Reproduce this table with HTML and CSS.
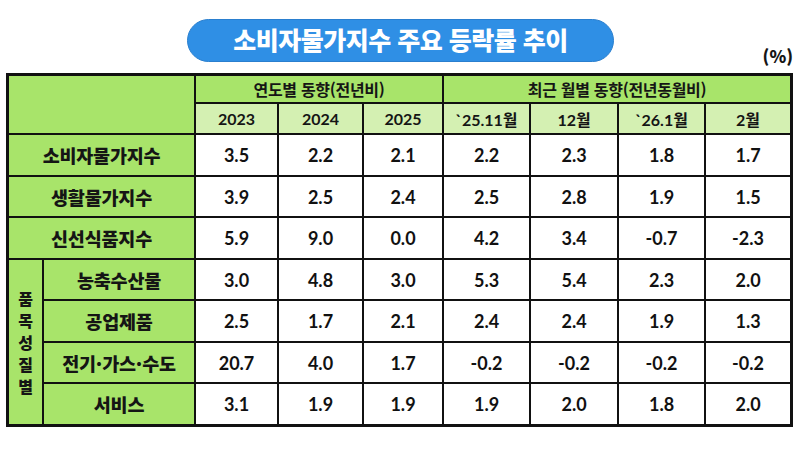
FILE: index.html
```html
<!DOCTYPE html>
<html lang="ko">
<head>
<meta charset="utf-8">
<link rel="stylesheet" href="styles.css">
</head>
<body>
<div class="page">
  <div class="head">
    <div class="title">소비자물가지수 주요 등락률 추이</div>
    <div class="unit">(%)</div>
  </div>
  <table class="cpi">
    <colgroup>
      <col class="c-a"><col class="c-b">
      <col class="c-1"><col class="c-2"><col class="c-3">
      <col class="c-4"><col class="c-5"><col class="c-6"><col class="c-7">
    </colgroup>
    <thead>
      <tr class="h1">
        <th colspan="2" rowspan="2" class="green"></th>
        <th colspan="3" class="green">연도별 동향(전년비)</th>
        <th colspan="4" class="green">최근 월별 동향(전년동월비)</th>
      </tr>
      <tr class="h2">
        <th class="light">2023</th><th class="light">2024</th><th class="light">2025</th>
        <th class="light">`25.11월</th><th class="light">12월</th><th class="light">`26.1월</th><th class="light">2월</th>
      </tr>
    </thead>
    <tbody>
      <tr class="r42">
        <th colspan="2" class="green label">소비자물가지수</th>
        <td>3.5</td><td>2.2</td><td>2.1</td><td>2.2</td><td>2.3</td><td>1.8</td><td>1.7</td>
      </tr>
      <tr class="r41">
        <th colspan="2" class="green label">생활물가지수</th>
        <td>3.9</td><td>2.5</td><td>2.4</td><td>2.5</td><td>2.8</td><td>1.9</td><td>1.5</td>
      </tr>
      <tr class="r42">
        <th colspan="2" class="green label">신선식품지수</th>
        <td>5.9</td><td>9.0</td><td>0.0</td><td>4.2</td><td>3.4</td><td>-0.7</td><td>-2.3</td>
      </tr>
      <tr class="r41">
        <th rowspan="4" class="green vert"><div class="vstack"><span>품</span><span>목</span><span>성</span><span>질</span><span>별</span></div></th>
        <th class="green label">농축수산물</th>
        <td>3.0</td><td>4.8</td><td>3.0</td><td>5.3</td><td>5.4</td><td>2.3</td><td>2.0</td>
      </tr>
      <tr class="r42">
        <th class="green label">공업제품</th>
        <td>2.5</td><td>1.7</td><td>2.1</td><td>2.4</td><td>2.4</td><td>1.9</td><td>1.3</td>
      </tr>
      <tr class="r41">
        <th class="green label">전기·가스·수도</th>
        <td>20.7</td><td>4.0</td><td>1.7</td><td>-0.2</td><td>-0.2</td><td>-0.2</td><td>-0.2</td>
      </tr>
      <tr class="r42">
        <th class="green label">서비스</th>
        <td>3.1</td><td>1.9</td><td>1.9</td><td>1.9</td><td>2.0</td><td>1.8</td><td>2.0</td>
      </tr>
    </tbody>
  </table>
</div>
</body>
</html>
```
FILE: styles.css
```css
* { box-sizing: border-box; }
html, body { margin: 0; padding: 0; background: #ffffff; }
body {
  width: 800px;
  height: 450px;
  overflow: hidden;
  font-family: "Noto Sans CJK KR", "Noto Sans", sans-serif;
  color: #151515;
}
.page { padding: 19px 7px 0 6px; }

.head {
  display: grid;
  height: 51px;
  margin-bottom: 3px;
}
.title, .unit { grid-area: 1 / 1; }
.title {
  justify-self: center;
  align-self: start;
  margin-left: 2px;
  width: 427px;
  height: 43px;
  border-radius: 22px;
  background: #2f8fe5;
  border: 1px solid #2a7fcf;
  color: #ffffff;
  font-weight: 900;
  font-size: 25px;
  line-height: 39px;
  text-align: center;
  letter-spacing: -0.5px;
}
.unit {
  justify-self: end;
  align-self: end;
  font-weight: 900;
  font-size: 17px;
  line-height: 20px;
  margin-bottom: 4px;
}

.cpi {
  width: 787px;
  table-layout: fixed;
  border-collapse: separate;
  border-spacing: 0;
  border: 2px solid #111;
}
.cpi th, .cpi td {
  border: 1px solid #111;
  padding: 0;
  text-align: center;
  vertical-align: middle;
}
.c-a { width: 35px; }
.c-b { width: 152px; }
.c-1 { width: 83px; }
.c-2 { width: 85px; }
.c-3 { width: 80px; }
.c-4 { width: 87px; }
.c-5 { width: 88px; }
.c-6 { width: 87px; }
.c-7 { width: 86px; }

.h1 { height: 28px; }
.h2 { height: 31px; }
.r42 { height: 42px; }
.r41 { height: 41px; }

.green { background: #a8e46a; }
.light { background: #d4f0b2; }

.h1 th {
  font-size: 16px;
  font-weight: 700;
  letter-spacing: -0.3px;
}
.h2 th {
  font-family: "Lato", "Noto Sans CJK KR", sans-serif;
  font-size: 16px;
  font-weight: 700;
}
.label {
  font-size: 18.5px;
  font-weight: 900;
  letter-spacing: -0.2px;
}
.cpi td {
  font-family: "Lato", "Noto Sans", sans-serif;
  font-size: 18px;
  font-weight: 700;
  color: #111;
  background: #fff;
}
.vstack {
  display: flex;
  flex-direction: column;
  align-items: center;
  font-size: 16px;
  font-weight: 900;
  line-height: 22px;
}
```
